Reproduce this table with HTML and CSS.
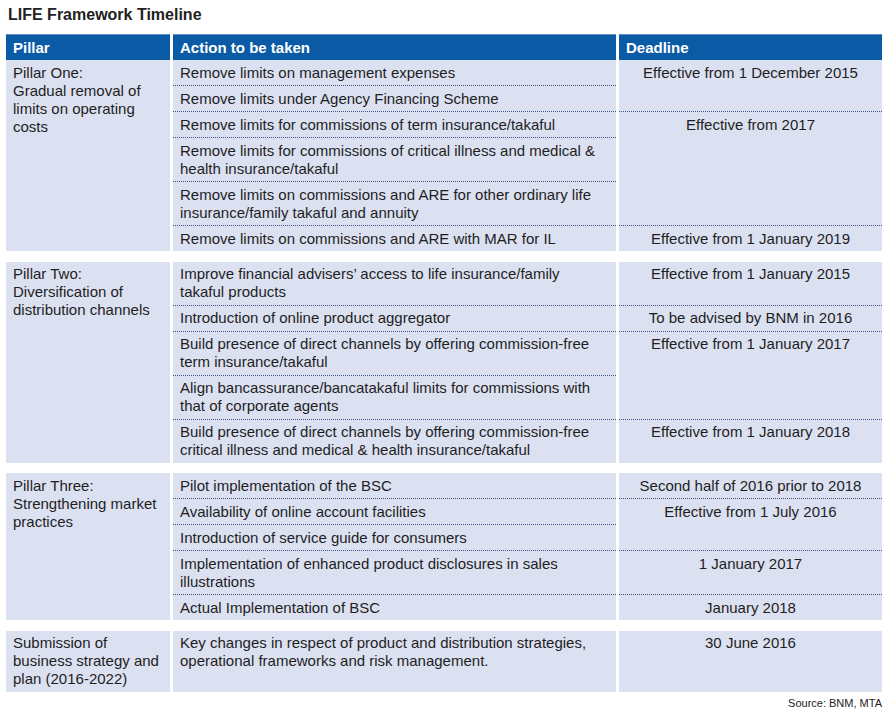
FILE: index.html
```html
<!DOCTYPE html>
<html lang="en">
<head>
<meta charset="utf-8">
<title>LIFE Framework Timeline</title>
<link rel="stylesheet" href="styles.css">
</head>
<body>
<div class="page">
  <h1 class="title">LIFE Framework Timeline</h1>
  <div class="block head">
    <div class="hcell">Pillar</div>
    <div class="hcell">Action to be taken</div>
    <div class="hcell">Deadline</div>
  </div>

  <div class="block">
    <div class="pillar" style="grid-row: 1 / span 6">Pillar One:<br>Gradual removal of limits on operating costs</div>
    <div class="act" style="grid-row: 1">Remove limits on management expenses</div>
    <div class="act sep" style="grid-row: 2">Remove limits under Agency Financing Scheme</div>
    <div class="act sep" style="grid-row: 3">Remove limits for commissions of term insurance/takaful</div>
    <div class="act sep" style="grid-row: 4">Remove limits for commissions of critical illness and medical &amp; health insurance/takaful</div>
    <div class="act sep" style="grid-row: 5">Remove limits on commissions and ARE for other ordinary life insurance/family takaful and annuity</div>
    <div class="act sep" style="grid-row: 6">Remove limits on commissions and ARE with MAR for IL</div>
    <div class="dl" style="grid-row: 1 / span 2">Effective from 1 December 2015</div>
    <div class="dl sep" style="grid-row: 3 / span 3">Effective from 2017</div>
    <div class="dl sep" style="grid-row: 6">Effective from 1 January 2019</div>
  </div>

  <div class="block">
    <div class="pillar" style="grid-row: 1 / span 5">Pillar Two:<br>Diversification of distribution channels</div>
    <div class="act" style="grid-row: 1">Improve financial advisers’ access to life insurance/family takaful products</div>
    <div class="act sep" style="grid-row: 2">Introduction of online product aggregator</div>
    <div class="act sep" style="grid-row: 3">Build presence of direct channels by offering commission-free term insurance/takaful</div>
    <div class="act sep" style="grid-row: 4">Align bancassurance/bancatakaful limits for commissions with that of corporate agents</div>
    <div class="act sep" style="grid-row: 5">Build presence of direct channels by offering commission-free critical illness and medical &amp; health insurance/takaful</div>
    <div class="dl" style="grid-row: 1">Effective from 1 January 2015</div>
    <div class="dl sep" style="grid-row: 2">To be advised by BNM in 2016</div>
    <div class="dl sep" style="grid-row: 3 / span 2">Effective from 1 January 2017</div>
    <div class="dl sep" style="grid-row: 5">Effective from 1 January 2018</div>
  </div>

  <div class="block">
    <div class="pillar" style="grid-row: 1 / span 5">Pillar Three:<br>Strengthening market practices</div>
    <div class="act" style="grid-row: 1">Pilot implementation of the BSC</div>
    <div class="act sep" style="grid-row: 2">Availability of online account facilities</div>
    <div class="act sep" style="grid-row: 3">Introduction of service guide for consumers</div>
    <div class="act sep" style="grid-row: 4">Implementation of enhanced product disclosures in sales illustrations</div>
    <div class="act sep" style="grid-row: 5">Actual Implementation of BSC</div>
    <div class="dl" style="grid-row: 1">Second half of 2016 prior to 2018</div>
    <div class="dl sep" style="grid-row: 2 / span 2">Effective from 1 July 2016</div>
    <div class="dl sep" style="grid-row: 4">1 January 2017</div>
    <div class="dl sep" style="grid-row: 5">January 2018</div>
  </div>

  <div class="block">
    <div class="pillar" style="grid-row: 1">Submission of business strategy and plan (2016-2022)</div>
    <div class="act" style="grid-row: 1">Key changes in respect of product and distribution strategies, operational frameworks and risk management.</div>
    <div class="dl" style="grid-row: 1">30 June 2016</div>
  </div>

  <div class="source">Source: BNM, MTA</div>
</div>
</body>
</html>
```

FILE: styles.css
```css
* { box-sizing: border-box; }
html, body { margin: 0; padding: 0; background: #ffffff; }
body {
  font-family: "Liberation Sans", Arial, sans-serif;
  color: #1e1e1e;
  font-size: 15px;
}
.page {
  width: 889px;
  padding: 5px 7px 0 6px;
}
.title {
  margin: 0 0 0 2px;
  font-size: 16px;
  font-weight: bold;
  line-height: 20px;
  color: #222;
  height: 29px;
}
.block {
  display: grid;
  grid-template-columns: 164px 443px 263px;
  column-gap: 3px;
  margin-bottom: 10.5px;
}
.block.head {
  margin-bottom: 0;
}
.hcell {
  background: #0a5aa6;
  color: #ffffff;
  font-weight: bold;
  line-height: 19px;
  padding: 3px 7px 3px 7px;
  border-top: 1px solid #5f8fc4;
}
.pillar, .act, .dl {
  background: #dce1f2;
  line-height: 18px;
  padding: 3.5px 7px 3.5px 7px;
}
.pillar { grid-column: 1; }
.act { grid-column: 2; padding-right: 14px; }
.dl { grid-column: 3; text-align: center; }
.sep { border-top: 1px dotted #3a5785; }
.source {
  text-align: right;
  font-size: 11px;
  line-height: 14px;
  margin-top: -6px;
  color: #222;
}
```
